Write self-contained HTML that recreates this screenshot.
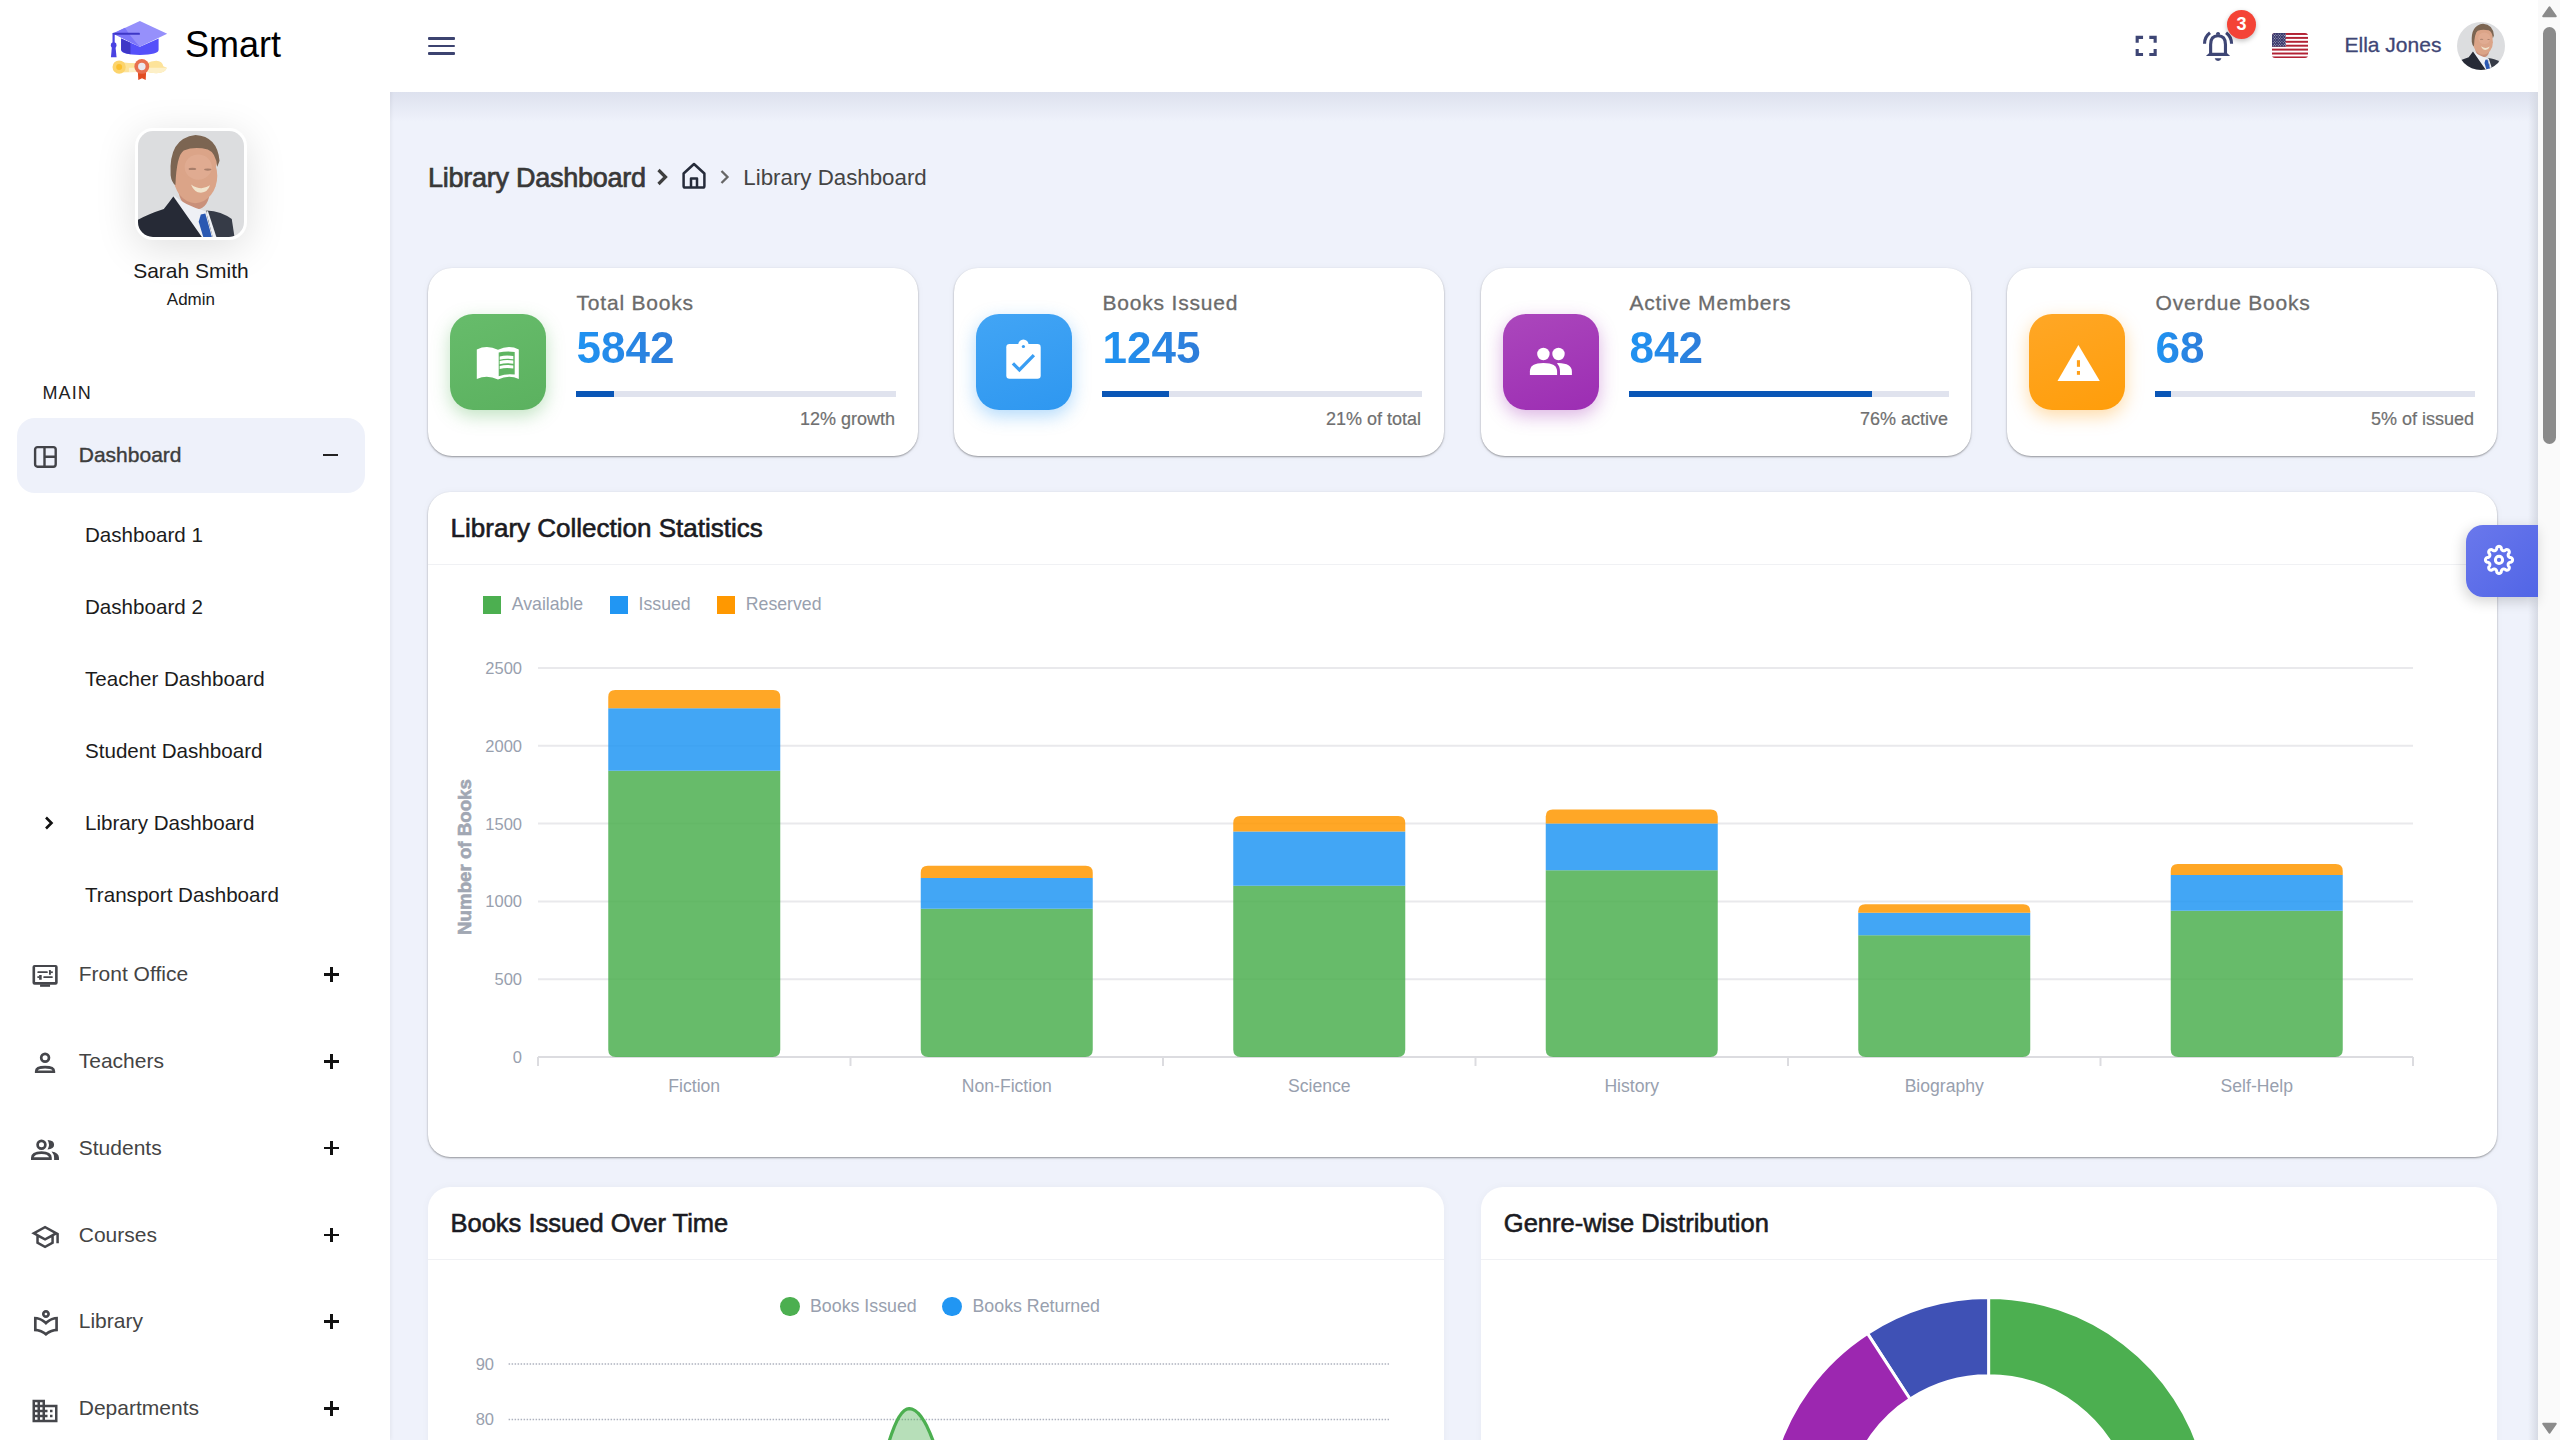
<!DOCTYPE html>
<html><head><meta charset="utf-8"><title>Library Dashboard</title><style>
*{margin:0;padding:0;box-sizing:border-box}
html,body{width:2560px;height:1440px;overflow:hidden;background:#eff2fb;font-family:"Liberation Sans", sans-serif;}
.t{position:absolute;white-space:nowrap;}
.a{position:absolute;}
svg{position:absolute;overflow:visible}
</style></head><body>
<div class="a" style="left:390px;top:92px;width:2148px;height:30px;background:linear-gradient(#dde1ee,rgba(239,242,251,0));"></div>
<div class="a" style="left:2528px;top:92px;width:10px;height:1348px;background:linear-gradient(90deg,rgba(215,219,230,0),#d6dae4);"></div>
<div class="a" style="left:0;top:0;width:390px;height:1440px;background:#fff;box-shadow:1px 0 4px rgba(0,0,0,.06);"></div>
<div class="a" style="left:0;top:0;width:2538px;height:92px;background:#fff;"></div>
<div class="a" style="left:2538px;top:0;width:22px;height:1440px;background:#fafafa;"></div>
<div class="a" style="left:2543px;top:27px;width:13px;height:417px;background:#8a8a8a;border-radius:7px;"></div>
<svg style="left:2540px;top:4px" width="20" height="16"><path d="M3.2,12.3 L9.5,3.3 L15.8,12.3Z" fill="#8a8a8a" stroke="#8a8a8a" stroke-width="2" stroke-linejoin="round"/></svg>
<svg style="left:2540px;top:1420px" width="20" height="16"><path d="M3.2,3.7 L9.5,12.7 L15.8,3.7Z" fill="#8a8a8a" stroke="#8a8a8a" stroke-width="2" stroke-linejoin="round"/></svg>
<svg style="left:100px;top:10px" width="200" height="80" viewBox="0 0 2560 1024">
<path d="M245,665 Q420,690 600,680 Q650,650 720,648 Q800,650 810,720 L855,738 Q840,805 720,808 Q640,805 600,790 L245,800Z" fill="#fde39a"/>
<path d="M370,740 L855,738 Q840,805 720,808 Q640,805 600,790 L370,792Z" fill="#fdf0c8"/>
<circle cx="245" cy="730" r="85" fill="#fcd46c"/><circle cx="245" cy="730" r="38" fill="#fbbf2d"/>
<path d="M485,795 H590 L585,895 L538,872 L490,895Z" fill="#e24c21"/>
<circle cx="535" cy="722" r="95" fill="#e86f4f"/><circle cx="535" cy="722" r="48" fill="#e9e7ef"/>
<path d="M270,365 V510 Q270,575 510,575 Q750,575 750,510 V365 L510,470Z" fill="#5550fa"/>
<path d="M270,365 V510 Q285,555 390,565 V420Z" fill="#3e37c6"/>
<path d="M510,140 L860,305 L510,470 L165,300Z" fill="#9690fb"/>
<path d="M165,300 L320,228 Q380,330 510,470Z" fill="#7c75f9"/>
<rect x="165" y="290" width="345" height="28" rx="6" fill="#3e37c6"/>
<rect x="160" y="300" width="28" height="150" fill="#4a43e2"/>
<circle cx="175" cy="450" r="36" fill="#4a43e2"/>
<path d="M152,470 H198 L212,605 H140Z" fill="#4a43e2"/>
</svg>
<div class="t" style="left:185px;top:26.53px;font-size:36px;line-height:36px;color:#000;font-weight:400;">Smart</div>
<div class="a" style="left:427.6px;top:37.05px;width:27.1px;height:2.7px;background:#3c4370;border-radius:1px;"></div>
<div class="a" style="left:427.6px;top:44.55px;width:27.1px;height:2.7px;background:#3c4370;border-radius:1px;"></div>
<div class="a" style="left:427.6px;top:52.05px;width:27.1px;height:2.7px;background:#3c4370;border-radius:1px;"></div>
<svg style="left:2120px;top:10px" width="200" height="70" viewBox="0 0 2560 896">
<g fill="none" stroke="#3e4675" stroke-width="40" stroke-linejoin="miter" stroke-linecap="butt">
<path d="M220,418 V350 H295"/><path d="M375,350 H450 V418"/><path d="M220,500 V570 H295"/><path d="M375,570 H450 V500"/>
<path d="M1160,560 V440 Q1160,330 1255,330 Q1350,330 1350,440 V560"/>
<path d="M1152,292 Q1082,345 1082,432"/><path d="M1358,292 Q1428,345 1428,432"/>
</g>
<path d="M1100,590 H1410 L1365,548 H1145Z" fill="#3e4675"/>
<path d="M1228,318 Q1228,282 1255,282 Q1282,282 1282,318Z" fill="#3e4675"/>
<path d="M1212,618 H1298 Q1290,652 1255,652 Q1220,652 1212,618Z" fill="#3e4675"/>
</svg>
<div class="a" style="left:2227px;top:9.5px;width:29px;height:29px;border-radius:50%;background:#f44336;box-shadow:0 2px 5px rgba(0,0,0,.25);"></div>
<div class="t" style="left:1741.6px;width:1000px;text-align:center;top:14.76px;font-size:18px;line-height:18px;color:#fff;font-weight:700;">3</div>
<div class="a" style="left:2272px;top:33px;width:36px;height:25.4px;border-radius:3px;overflow:hidden;background:#fff;">
<svg style="left:0;top:0" width="36" height="25.4"><rect x="0" y="0.000" width="36" height="1.954" fill="#b22234"/><rect x="0" y="3.908" width="36" height="1.954" fill="#b22234"/><rect x="0" y="7.815" width="36" height="1.954" fill="#b22234"/><rect x="0" y="11.723" width="36" height="1.954" fill="#b22234"/><rect x="0" y="15.631" width="36" height="1.954" fill="#b22234"/><rect x="0" y="19.538" width="36" height="1.954" fill="#b22234"/><rect x="0" y="23.446" width="36" height="1.954" fill="#b22234"/><rect x="0" y="0" width="13.7" height="13.7" fill="#3c3b6e"/><circle cx="1.20" cy="1.10" r="0.45" fill="#fff"/><circle cx="3.70" cy="1.10" r="0.45" fill="#fff"/><circle cx="6.20" cy="1.10" r="0.45" fill="#fff"/><circle cx="8.70" cy="1.10" r="0.45" fill="#fff"/><circle cx="11.20" cy="1.10" r="0.45" fill="#fff"/><circle cx="13.70" cy="1.10" r="0.45" fill="#fff"/><circle cx="2.45" cy="2.55" r="0.45" fill="#fff"/><circle cx="4.95" cy="2.55" r="0.45" fill="#fff"/><circle cx="7.45" cy="2.55" r="0.45" fill="#fff"/><circle cx="9.95" cy="2.55" r="0.45" fill="#fff"/><circle cx="12.45" cy="2.55" r="0.45" fill="#fff"/><circle cx="1.20" cy="4.00" r="0.45" fill="#fff"/><circle cx="3.70" cy="4.00" r="0.45" fill="#fff"/><circle cx="6.20" cy="4.00" r="0.45" fill="#fff"/><circle cx="8.70" cy="4.00" r="0.45" fill="#fff"/><circle cx="11.20" cy="4.00" r="0.45" fill="#fff"/><circle cx="13.70" cy="4.00" r="0.45" fill="#fff"/><circle cx="2.45" cy="5.45" r="0.45" fill="#fff"/><circle cx="4.95" cy="5.45" r="0.45" fill="#fff"/><circle cx="7.45" cy="5.45" r="0.45" fill="#fff"/><circle cx="9.95" cy="5.45" r="0.45" fill="#fff"/><circle cx="12.45" cy="5.45" r="0.45" fill="#fff"/><circle cx="1.20" cy="6.90" r="0.45" fill="#fff"/><circle cx="3.70" cy="6.90" r="0.45" fill="#fff"/><circle cx="6.20" cy="6.90" r="0.45" fill="#fff"/><circle cx="8.70" cy="6.90" r="0.45" fill="#fff"/><circle cx="11.20" cy="6.90" r="0.45" fill="#fff"/><circle cx="13.70" cy="6.90" r="0.45" fill="#fff"/><circle cx="2.45" cy="8.35" r="0.45" fill="#fff"/><circle cx="4.95" cy="8.35" r="0.45" fill="#fff"/><circle cx="7.45" cy="8.35" r="0.45" fill="#fff"/><circle cx="9.95" cy="8.35" r="0.45" fill="#fff"/><circle cx="12.45" cy="8.35" r="0.45" fill="#fff"/><circle cx="1.20" cy="9.80" r="0.45" fill="#fff"/><circle cx="3.70" cy="9.80" r="0.45" fill="#fff"/><circle cx="6.20" cy="9.80" r="0.45" fill="#fff"/><circle cx="8.70" cy="9.80" r="0.45" fill="#fff"/><circle cx="11.20" cy="9.80" r="0.45" fill="#fff"/><circle cx="13.70" cy="9.80" r="0.45" fill="#fff"/><circle cx="2.45" cy="11.25" r="0.45" fill="#fff"/><circle cx="4.95" cy="11.25" r="0.45" fill="#fff"/><circle cx="7.45" cy="11.25" r="0.45" fill="#fff"/><circle cx="9.95" cy="11.25" r="0.45" fill="#fff"/><circle cx="12.45" cy="11.25" r="0.45" fill="#fff"/><circle cx="1.20" cy="12.70" r="0.45" fill="#fff"/><circle cx="3.70" cy="12.70" r="0.45" fill="#fff"/><circle cx="6.20" cy="12.70" r="0.45" fill="#fff"/><circle cx="8.70" cy="12.70" r="0.45" fill="#fff"/><circle cx="11.20" cy="12.70" r="0.45" fill="#fff"/><circle cx="13.70" cy="12.70" r="0.45" fill="#fff"/></svg></div>
<div class="t" style="left:2344.5px;top:34.22px;font-size:21px;line-height:21px;color:#3e4675;font-weight:400;-webkit-text-stroke:0.3px #3e4675;">Ella Jones</div>
<div class="a" style="left:135px;top:128px;width:112px;height:112px;border-radius:18px;background:#fff;box-shadow:0 8px 40px rgba(0,0,0,.13);"></div>
<div class="a" style="left:138px;top:131px;width:106px;height:106px;border-radius:15px;overflow:hidden;">
<svg style="left:0;top:0" width="106" height="106" viewBox="135 120 1170 1175" preserveAspectRatio="none"><rect x="135" y="120" width="1170" height="1175" fill="#dcdddf"/>
<path d="M890,1000 Q1060,1010 1170,1095 L1200,1295 H930Z" fill="#363b47"/>
<path d="M575,760 Q600,960 760,990 Q900,990 925,820 L930,700 L600,700Z" fill="#c9907a"/>
<path d="M525,830 Q640,940 880,1010 L960,1295 H820Z" fill="#eef0f5"/>
<path d="M135,1105 Q250,1040 420,985 Q470,920 525,845 L840,1295 H135Z" fill="#262a36"/>
<path d="M905,1000 L1000,1295 H960 L890,1030Z" fill="#eef0f5"/>
<path d="M828,1045 L878,1035 L905,1130 L950,1295 H855 L805,1125Z" fill="#2a58b2"/>
<ellipse cx="768" cy="615" rx="242" ry="305" fill="#dba488"/><ellipse cx="775" cy="450" rx="235" ry="200" fill="#dba488"/>
<ellipse cx="800" cy="520" rx="150" ry="140" fill="#e3b198" opacity=".6"/>
<path d="M495,610 Q470,200 770,165 Q1010,180 1035,450 L1010,520 Q995,360 905,325 Q760,290 640,335 Q560,390 548,720 Q505,690 495,610Z" fill="#7c6552"/>
<path d="M720,712 Q830,790 930,722 Q905,800 830,805 Q755,800 720,712Z" fill="#f1e4cc"/>
<ellipse cx="735" cy="540" rx="42" ry="13" fill="#7a5a4a" opacity=".55"/><ellipse cx="905" cy="548" rx="40" ry="12" fill="#7a5a4a" opacity=".55"/>
</svg></div>
<div class="a" style="left:2457px;top:22px;width:48px;height:48px;border-radius:50%;overflow:hidden;">
<svg style="left:0;top:0" width="48" height="48" viewBox="135 120 1170 1175" preserveAspectRatio="none"><rect x="135" y="120" width="1170" height="1175" fill="#dcdddf"/>
<path d="M890,1000 Q1060,1010 1170,1095 L1200,1295 H930Z" fill="#363b47"/>
<path d="M575,760 Q600,960 760,990 Q900,990 925,820 L930,700 L600,700Z" fill="#c9907a"/>
<path d="M525,830 Q640,940 880,1010 L960,1295 H820Z" fill="#eef0f5"/>
<path d="M135,1105 Q250,1040 420,985 Q470,920 525,845 L840,1295 H135Z" fill="#262a36"/>
<path d="M905,1000 L1000,1295 H960 L890,1030Z" fill="#eef0f5"/>
<path d="M828,1045 L878,1035 L905,1130 L950,1295 H855 L805,1125Z" fill="#2a58b2"/>
<ellipse cx="768" cy="615" rx="242" ry="305" fill="#dba488"/><ellipse cx="775" cy="450" rx="235" ry="200" fill="#dba488"/>
<ellipse cx="800" cy="520" rx="150" ry="140" fill="#e3b198" opacity=".6"/>
<path d="M495,610 Q470,200 770,165 Q1010,180 1035,450 L1010,520 Q995,360 905,325 Q760,290 640,335 Q560,390 548,720 Q505,690 495,610Z" fill="#7c6552"/>
<path d="M720,712 Q830,790 930,722 Q905,800 830,805 Q755,800 720,712Z" fill="#f1e4cc"/>
<ellipse cx="735" cy="540" rx="42" ry="13" fill="#7a5a4a" opacity=".55"/><ellipse cx="905" cy="548" rx="40" ry="12" fill="#7a5a4a" opacity=".55"/>
</svg></div>
<div class="t" style="left:-309.1px;width:1000px;text-align:center;top:260.22px;font-size:21px;line-height:21px;color:#1a1a1a;font-weight:400;">Sarah Smith</div>
<div class="t" style="left:-309.1px;width:1000px;text-align:center;top:290.61px;font-size:17px;line-height:17px;color:#1a1a1a;font-weight:400;">Admin</div>
<div class="t" style="left:42.5px;top:383.51px;font-size:18px;line-height:18px;color:#222;font-weight:400;letter-spacing:1.1px;">MAIN</div>
<div class="a" style="left:17px;top:418px;width:348px;height:75px;border-radius:18px;background:#eef1fa;"></div>
<svg style="left:33px;top:445px" width="25" height="24" viewBox="0 0 25 24"><g fill="none" stroke="#424348" stroke-width="2.4">
<rect x="2.1" y="2.1" width="20.6" height="19.6" rx="2.4"/><path d="M11.5,2 V21.8 M11.5,11.8 H22.8"/></g></svg>
<div class="t" style="left:78.75px;top:444.22px;font-size:21px;line-height:21px;color:#3d3d3d;font-weight:400;-webkit-text-stroke:0.4px #3d3d3d;">Dashboard</div>
<div class="a" style="left:323px;top:453.8px;width:14.5px;height:2.5px;background:#222;"></div>
<div class="t" style="left:85px;top:524.56px;font-size:20.6px;line-height:20.6px;color:#1c1c1c;font-weight:400;">Dashboard 1</div>
<div class="t" style="left:85px;top:596.56px;font-size:20.6px;line-height:20.6px;color:#1c1c1c;font-weight:400;">Dashboard 2</div>
<div class="t" style="left:85px;top:668.56px;font-size:20.6px;line-height:20.6px;color:#1c1c1c;font-weight:400;">Teacher Dashboard</div>
<div class="t" style="left:85px;top:740.56px;font-size:20.6px;line-height:20.6px;color:#1c1c1c;font-weight:400;">Student Dashboard</div>
<div class="t" style="left:85px;top:812.56px;font-size:20.6px;line-height:20.6px;color:#1c1c1c;font-weight:400;">Library Dashboard</div>
<div class="t" style="left:85px;top:884.56px;font-size:20.6px;line-height:20.6px;color:#1c1c1c;font-weight:400;">Transport Dashboard</div>
<svg style="left:42px;top:814px" width="14" height="18" viewBox="0 0 14 18"><path d="M4,3.5 L9.5,9 L4,14.5" fill="none" stroke="#111" stroke-width="2.6"/></svg>
<div class="t" style="left:78.75px;top:963.22px;font-size:21px;line-height:21px;color:#444;font-weight:400;">Front Office</div>
<div class="a" style="left:324px;top:973.20px;width:14.75px;height:2.6px;background:#111;"></div>
<div class="a" style="left:330.1px;top:967.10px;width:2.6px;height:14.75px;background:#111;"></div>
<div class="t" style="left:78.75px;top:1050.02px;font-size:21px;line-height:21px;color:#444;font-weight:400;">Teachers</div>
<div class="a" style="left:324px;top:1060.00px;width:14.75px;height:2.6px;background:#111;"></div>
<div class="a" style="left:330.1px;top:1053.90px;width:2.6px;height:14.75px;background:#111;"></div>
<div class="t" style="left:78.75px;top:1136.82px;font-size:21px;line-height:21px;color:#444;font-weight:400;">Students</div>
<div class="a" style="left:324px;top:1146.80px;width:14.75px;height:2.6px;background:#111;"></div>
<div class="a" style="left:330.1px;top:1140.70px;width:2.6px;height:14.75px;background:#111;"></div>
<div class="t" style="left:78.75px;top:1223.62px;font-size:21px;line-height:21px;color:#444;font-weight:400;">Courses</div>
<div class="a" style="left:324px;top:1233.60px;width:14.75px;height:2.6px;background:#111;"></div>
<div class="a" style="left:330.1px;top:1227.50px;width:2.6px;height:14.75px;background:#111;"></div>
<div class="t" style="left:78.75px;top:1310.42px;font-size:21px;line-height:21px;color:#444;font-weight:400;">Library</div>
<div class="a" style="left:324px;top:1320.40px;width:14.75px;height:2.6px;background:#111;"></div>
<div class="a" style="left:330.1px;top:1314.30px;width:2.6px;height:14.75px;background:#111;"></div>
<div class="t" style="left:78.75px;top:1397.22px;font-size:21px;line-height:21px;color:#444;font-weight:400;">Departments</div>
<div class="a" style="left:324px;top:1407.20px;width:14.75px;height:2.6px;background:#111;"></div>
<div class="a" style="left:330.1px;top:1401.10px;width:2.6px;height:14.75px;background:#111;"></div>
<svg style="left:20px;top:950px" width="60" height="50" viewBox="0 0 1728 1440"><g fill="#45464b">
<path fill-rule="evenodd" d="M420,430 H1025 Q1085,430 1085,490 V940 Q1085,1000 1025,1000 H420 Q360,1000 360,940 V490 Q360,430 420,430Z M435,490 V925 H1010 V490Z"/>
<rect x="578" y="990" width="287" height="70"/>
<rect x="500" y="615" width="300" height="50" rx="20"/><rect x="835" y="578" width="55" height="137" rx="10"/><rect x="880" y="615" width="65" height="50"/>
<rect x="670" y="755" width="275" height="50" rx="20"/><rect x="550" y="720" width="75" height="140" rx="10"/><rect x="500" y="755" width="60" height="50"/>
</g></svg>
<svg style="left:20px;top:1040px" width="60" height="130" viewBox="0 0 665 1440">
<circle cx="278" cy="197" r="43" fill="none" stroke="#45464b" stroke-width="30"/>
<path fill="#45464b" fill-rule="evenodd" d="M165,365 V345 Q165,285 278,285 Q390,285 390,345 V365Z M197,337 Q212,315 278,315 Q345,315 360,337Z"/>
<circle cx="238" cy="1160" r="43" fill="none" stroke="#45464b" stroke-width="30"/>
<path fill="#45464b" d="M305,1108 Q378,1112 378,1160 Q378,1208 305,1212 Q338,1160 305,1108Z"/>
<path fill="#45464b" fill-rule="evenodd" d="M122,1330 V1305 Q122,1232 238,1232 Q352,1232 352,1305 V1330Z M152,1300 Q165,1262 238,1262 Q310,1262 322,1300Z"/>
<path fill="#45464b" d="M350,1236 Q432,1250 432,1305 V1330 H378 V1305 Q378,1268 350,1236Z"/>
</svg>
<svg style="left:30.25px;top:1222.2px" width="30.1" height="30.1" viewBox="0 0 24 24"><path fill="#45464b" d="M12 3L1 9l4 2.18v6L12 21l7-3.82v-6l2-1.09V17h2V9L12 3zm6.82 6L12 12.72 5.18 9 12 5.28 18.82 9zM17 15.99l-5 2.73-5-2.73v-3.72L12 15l5-2.73v3.72z"/></svg>
<svg style="left:29.6px;top:1305.8px" width="31.9" height="31.9" viewBox="0 0 24 24"><path fill="#45464b" d="M12 9c1.66 0 3-1.34 3-3s-1.34-3-3-3-3 1.34-3 3 1.34 3 3 3zm0-4c.55 0 1 .45 1 1s-.45 1-1 1-1-.45-1-1 .45-1 1-1zm0 6.55C9.64 9.35 6.48 8 3 8v11c3.48 0 6.64 1.35 9 3.55 2.36-2.19 5.52-3.55 9-3.55V8c-3.48 0-6.64 1.35-9 3.55zm7 5.58c-2.53.34-4.93 1.3-7 2.82-2.06-1.52-4.470-2.49-7-2.83v-6.95c2.1.38 4.05 1.35 5.64 2.83L12 14.28l1.36-1.27c1.59-1.48 3.54-2.45 5.64-2.830v6.95z"/></svg>
<svg style="left:30px;top:1396px" width="30" height="30" viewBox="0 0 24 24"><path fill="#45464b" d="M12 7V3H2v18h20V7H12zM6 19H4v-2h2v2zm0-4H4v-2h2v2zm0-4H4V9h2v2zm0-4H4V5h2v2zm4 12H8v-2h2v2zm0-4H8v-2h2v2zm0-4H8V9h2v2zm0-4H8V5h2v2zm10 12h-8v-2h2v-2h-2v-2h2v-2h-2V9h8v10zm-2-8h-2v2h2v-2zm0 4h-2v2h2v-2z"/></svg>
<div class="t" style="left:428px;top:165.14px;font-size:27px;line-height:27px;color:#383838;font-weight:400;letter-spacing:-0.25px;-webkit-text-stroke:0.7px #383838;">Library Dashboard</div>
<svg style="left:654px;top:166px" width="18" height="22" viewBox="0 0 18 22"><path d="M4.5,4 L11.5,11 L4.5,18" fill="none" stroke="#3f3f3f" stroke-width="3.2"/></svg>
<svg style="left:681px;top:161px" width="26" height="29" viewBox="0 0 26 29"><path d="M2.6,12.5 L13,3 L23.4,12.5 V25 Q23.4,26.6 21.8,26.6 H4.2 Q2.6,26.6 2.6,25Z M10,26.6 V17.5 H16 V26.6" fill="none" stroke="#252b3a" stroke-width="2.5" stroke-linejoin="round"/></svg>
<svg style="left:718px;top:168px" width="15" height="18" viewBox="0 0 15 18"><path d="M3.5,3 L9.5,9 L3.5,15" fill="none" stroke="#666" stroke-width="2.3"/></svg>
<div class="t" style="left:743.3px;top:167.12px;font-size:22.3px;line-height:22.3px;color:#444;font-weight:400;">Library Dashboard</div>
<div class="a" style="left:428px;top:268px;width:490px;height:188px;background:#fff;border-radius:24px;box-shadow:0 1px 2px rgba(0,0,0,.38),0 0 8px rgba(0,0,0,.035);"></div>
<div class="a" style="left:450px;top:314px;width:96px;height:96px;border-radius:23px;background:linear-gradient(160deg,#67bc6b,#5bb15f);box-shadow:0 6px 18px rgba(76,175,80,.35);"><svg style="left:0;top:0" width="96" height="96" viewBox="0 0 96 96"><path fill="#fff" d="M26.8,35.5 Q37,30.5 48,35.8 Q59,30.5 68.8,35.5 V65 Q59,60.5 48,65.4 Q37,60.5 26.8,65Z"/><path fill="#5fb562" d="M48.7,38.6 Q56,36.6 64.7,37.9 V60.5 Q56,59.5 48.7,62.2Z"/><path fill="#fff" d="M49.7,42.6 Q56,40.8 63.3,42.1 V45.2 Q56,43.9 49.7,45.7Z M49.7,47.1 Q56,45.3 63.3,46.6 V49.7 Q56,48.4 49.7,50.2Z M49.7,52 Q56,50.2 63.3,51.5 V54.6 Q56,53.3 49.7,55.1Z"/></svg></div>
<div class="t" style="left:576.5px;top:292.22px;font-size:21px;line-height:21px;color:#6b6b6b;font-weight:400;letter-spacing:0.8px;-webkit-text-stroke:0.3px #6b6b6b;">Total Books</div>
<div class="t" style="left:576.5px;top:326.25px;font-size:44px;line-height:44px;color:#2389ea;font-weight:700;background:linear-gradient(90deg,#1f93f2,#2f7bd8);-webkit-background-clip:text;background-clip:text;color:transparent;padding-right:4px;">5842</div>
<div class="a" style="left:576px;top:391px;width:320px;height:6px;background:#e0e3ee;"></div>
<div class="a" style="left:576px;top:391px;width:38.4px;height:6px;background:#0a56b6;"></div>
<div class="t" style="right:1665px;text-align:right;top:409.76px;font-size:18px;line-height:18px;color:#707070;font-weight:400;-webkit-text-stroke:0.2px #707070;">12% growth</div>
<div class="a" style="left:954px;top:268px;width:490px;height:188px;background:#fff;border-radius:24px;box-shadow:0 1px 2px rgba(0,0,0,.38),0 0 8px rgba(0,0,0,.035);"></div>
<div class="a" style="left:976px;top:314px;width:96px;height:96px;border-radius:23px;background:linear-gradient(160deg,#42a5f5,#2e97f0);box-shadow:0 6px 18px rgba(33,150,243,.35);"><svg style="left:0;top:0" width="96" height="96" viewBox="0 0 96 96"><rect x="30.3" y="30" width="34.4" height="34.7" rx="3.2" fill="#fff"/><circle cx="47.4" cy="30.6" r="5.2" fill="#fff"/><circle cx="47.4" cy="32.5" r="1.6" fill="#3a9ef3"/><path d="M36.9,49.4 L43.4,55.9 L57.9,41.2" fill="none" stroke="#3a9ef3" stroke-width="3.3"/></svg></div>
<div class="t" style="left:1102.5px;top:292.22px;font-size:21px;line-height:21px;color:#6b6b6b;font-weight:400;letter-spacing:0.8px;-webkit-text-stroke:0.3px #6b6b6b;">Books Issued</div>
<div class="t" style="left:1102.5px;top:326.25px;font-size:44px;line-height:44px;color:#2389ea;font-weight:700;background:linear-gradient(90deg,#1f93f2,#2f7bd8);-webkit-background-clip:text;background-clip:text;color:transparent;padding-right:4px;">1245</div>
<div class="a" style="left:1102px;top:391px;width:320px;height:6px;background:#e0e3ee;"></div>
<div class="a" style="left:1102px;top:391px;width:67.2px;height:6px;background:#0a56b6;"></div>
<div class="t" style="right:1139px;text-align:right;top:409.76px;font-size:18px;line-height:18px;color:#707070;font-weight:400;-webkit-text-stroke:0.2px #707070;">21% of total</div>
<div class="a" style="left:1481px;top:268px;width:490px;height:188px;background:#fff;border-radius:24px;box-shadow:0 1px 2px rgba(0,0,0,.38),0 0 8px rgba(0,0,0,.035);"></div>
<div class="a" style="left:1503px;top:314px;width:96px;height:96px;border-radius:23px;background:linear-gradient(160deg,#ab47bc,#9c2db3);box-shadow:0 6px 18px rgba(156,39,176,.35);"><svg style="left:0;top:0" width="96" height="96" viewBox="0 0 96 96"><circle cx="40.4" cy="40" r="6.2" fill="#fff"/><circle cx="55.5" cy="40" r="6.2" fill="#fff"/><path fill="#fff" d="M26.9,60.9 V57.5 Q26.9,49.1 40.5,49.1 Q54.1,49.1 54.1,57.5 V60.9Z"/><path fill="#fff" d="M55.2,49.1 Q68.9,49.5 68.9,57.5 V60.9 H57 V57.5 Q57,52.3 53.9,49.2Z"/></svg></div>
<div class="t" style="left:1629.5px;top:292.22px;font-size:21px;line-height:21px;color:#6b6b6b;font-weight:400;letter-spacing:0.8px;-webkit-text-stroke:0.3px #6b6b6b;">Active Members</div>
<div class="t" style="left:1629.5px;top:326.25px;font-size:44px;line-height:44px;color:#2389ea;font-weight:700;background:linear-gradient(90deg,#1f93f2,#2f7bd8);-webkit-background-clip:text;background-clip:text;color:transparent;padding-right:4px;">842</div>
<div class="a" style="left:1629px;top:391px;width:320px;height:6px;background:#e0e3ee;"></div>
<div class="a" style="left:1629px;top:391px;width:243.2px;height:6px;background:#0a56b6;"></div>
<div class="t" style="right:612px;text-align:right;top:409.76px;font-size:18px;line-height:18px;color:#707070;font-weight:400;-webkit-text-stroke:0.2px #707070;">76% active</div>
<div class="a" style="left:2007px;top:268px;width:490px;height:188px;background:#fff;border-radius:24px;box-shadow:0 1px 2px rgba(0,0,0,.38),0 0 8px rgba(0,0,0,.035);"></div>
<div class="a" style="left:2029px;top:314px;width:96px;height:96px;border-radius:23px;background:linear-gradient(160deg,#ffa726,#ff9d0a);box-shadow:0 6px 18px rgba(255,152,0,.35);"><svg style="left:0;top:0" width="96" height="96" viewBox="0 0 96 96"><path fill="#fff" d="M49.4,30.9 L70.8,67 H28.5Z"/><rect x="47.9" y="46.2" width="3.1" height="6.6" fill="#ffa01a"/><rect x="47.9" y="57" width="3.1" height="3.8" fill="#ffa01a"/></svg></div>
<div class="t" style="left:2155.5px;top:292.22px;font-size:21px;line-height:21px;color:#6b6b6b;font-weight:400;letter-spacing:0.8px;-webkit-text-stroke:0.3px #6b6b6b;">Overdue Books</div>
<div class="t" style="left:2155.5px;top:326.25px;font-size:44px;line-height:44px;color:#2389ea;font-weight:700;background:linear-gradient(90deg,#1f93f2,#2f7bd8);-webkit-background-clip:text;background-clip:text;color:transparent;padding-right:4px;">68</div>
<div class="a" style="left:2155px;top:391px;width:320px;height:6px;background:#e0e3ee;"></div>
<div class="a" style="left:2155px;top:391px;width:16.0px;height:6px;background:#0a56b6;"></div>
<div class="t" style="right:86px;text-align:right;top:409.76px;font-size:18px;line-height:18px;color:#707070;font-weight:400;-webkit-text-stroke:0.2px #707070;">5% of issued</div>
<div class="a" style="left:428px;top:492px;width:2069px;height:665px;background:#fff;border-radius:22px;box-shadow:0 1px 2px rgba(0,0,0,.38),0 0 8px rgba(0,0,0,.035);"></div>
<div class="t" style="left:450.6px;top:514.99px;font-size:26px;line-height:26px;color:#1b1b22;font-weight:400;-webkit-text-stroke:0.6px #1b1b22;">Library Collection Statistics</div>
<div class="a" style="left:428px;top:563.5px;width:2069px;height:1.5px;background:#f0f1f4;"></div>
<div class="a" style="left:483px;top:596px;width:18px;height:18px;background:#4caf50;"></div>
<div class="t" style="left:511.75px;top:596.42px;font-size:17.7px;line-height:17.7px;color:#98a0ae;font-weight:400;">Available</div>
<div class="a" style="left:610.3px;top:596px;width:18px;height:18px;background:#2196f3;"></div>
<div class="t" style="left:638.6px;top:596.42px;font-size:17.7px;line-height:17.7px;color:#98a0ae;font-weight:400;">Issued</div>
<div class="a" style="left:717.2px;top:596px;width:18px;height:18px;background:#ff9800;"></div>
<div class="t" style="left:745.8px;top:596.42px;font-size:17.7px;line-height:17.7px;color:#98a0ae;font-weight:400;">Reserved</div>
<svg style="left:0;top:0" width="2560" height="1440" viewBox="0 0 2560 1440">
<line x1="538" y1="668.0" x2="2413" y2="668.0" stroke="#e9e9ec" stroke-width="2"/>
<line x1="538" y1="745.8" x2="2413" y2="745.8" stroke="#e9e9ec" stroke-width="2"/>
<line x1="538" y1="823.6" x2="2413" y2="823.6" stroke="#e9e9ec" stroke-width="2"/>
<line x1="538" y1="901.4" x2="2413" y2="901.4" stroke="#e9e9ec" stroke-width="2"/>
<line x1="538" y1="979.2" x2="2413" y2="979.2" stroke="#e9e9ec" stroke-width="2"/>
<line x1="538" y1="1057" x2="2413" y2="1057" stroke="#dcdce0" stroke-width="2"/>
<line x1="538.0" y1="1057" x2="538.0" y2="1066" stroke="#dcdce0" stroke-width="2"/>
<line x1="850.5" y1="1057" x2="850.5" y2="1066" stroke="#dcdce0" stroke-width="2"/>
<line x1="1163.0" y1="1057" x2="1163.0" y2="1066" stroke="#dcdce0" stroke-width="2"/>
<line x1="1475.5" y1="1057" x2="1475.5" y2="1066" stroke="#dcdce0" stroke-width="2"/>
<line x1="1788.0" y1="1057" x2="1788.0" y2="1066" stroke="#dcdce0" stroke-width="2"/>
<line x1="2100.5" y1="1057" x2="2100.5" y2="1066" stroke="#dcdce0" stroke-width="2"/>
<line x1="2413.0" y1="1057" x2="2413.0" y2="1066" stroke="#dcdce0" stroke-width="2"/>
<path d="M608.25,770.7 Q608.25,770.7 608.25,770.7 H780.25 Q780.25,770.7 780.25,770.7 V1049.5 Q780.25,1057 772.75,1057 H615.75 Q608.25,1057 608.25,1049.5 Z" fill="#4caf50" fill-opacity=".85"/>
<path d="M608.25,708.3 Q608.25,708.3 608.25,708.3 H780.25 Q780.25,708.3 780.25,708.3 V770.7 Q780.25,770.7 780.25,770.7 H608.25 Q608.25,770.7 608.25,770.7 Z" fill="#2196f3" fill-opacity=".85"/>
<path d="M608.25,697 Q608.25,690 615.25,690 H773.25 Q780.25,690 780.25,697 V708.3 Q780.25,708.3 780.25,708.3 H608.25 Q608.25,708.3 608.25,708.3 Z" fill="#ff9800" fill-opacity=".85"/>
<path d="M920.75,908.8 Q920.75,908.8 920.75,908.8 H1092.75 Q1092.75,908.8 1092.75,908.8 V1049.5 Q1092.75,1057 1085.25,1057 H928.25 Q920.75,1057 920.75,1049.5 Z" fill="#4caf50" fill-opacity=".85"/>
<path d="M920.75,877.9 Q920.75,877.9 920.75,877.9 H1092.75 Q1092.75,877.9 1092.75,877.9 V908.8 Q1092.75,908.8 1092.75,908.8 H920.75 Q920.75,908.8 920.75,908.8 Z" fill="#2196f3" fill-opacity=".85"/>
<path d="M920.75,872.7 Q920.75,865.7 927.75,865.7 H1085.75 Q1092.75,865.7 1092.75,872.7 V877.9 Q1092.75,877.9 1092.75,877.9 H920.75 Q920.75,877.9 920.75,877.9 Z" fill="#ff9800" fill-opacity=".85"/>
<path d="M1233.25,885.8 Q1233.25,885.8 1233.25,885.8 H1405.25 Q1405.25,885.8 1405.25,885.8 V1049.5 Q1405.25,1057 1397.75,1057 H1240.75 Q1233.25,1057 1233.25,1049.5 Z" fill="#4caf50" fill-opacity=".85"/>
<path d="M1233.25,831.5 Q1233.25,831.5 1233.25,831.5 H1405.25 Q1405.25,831.5 1405.25,831.5 V885.8 Q1405.25,885.8 1405.25,885.8 H1233.25 Q1233.25,885.8 1233.25,885.8 Z" fill="#2196f3" fill-opacity=".85"/>
<path d="M1233.25,823 Q1233.25,816 1240.25,816 H1398.25 Q1405.25,816 1405.25,823 V831.5 Q1405.25,831.5 1405.25,831.5 H1233.25 Q1233.25,831.5 1233.25,831.5 Z" fill="#ff9800" fill-opacity=".85"/>
<path d="M1545.75,870.3 Q1545.75,870.3 1545.75,870.3 H1717.75 Q1717.75,870.3 1717.75,870.3 V1049.5 Q1717.75,1057 1710.25,1057 H1553.25 Q1545.75,1057 1545.75,1049.5 Z" fill="#4caf50" fill-opacity=".85"/>
<path d="M1545.75,823.6 Q1545.75,823.6 1545.75,823.6 H1717.75 Q1717.75,823.6 1717.75,823.6 V870.3 Q1717.75,870.3 1717.75,870.3 H1545.75 Q1545.75,870.3 1545.75,870.3 Z" fill="#2196f3" fill-opacity=".85"/>
<path d="M1545.75,816.6 Q1545.75,809.6 1552.75,809.6 H1710.75 Q1717.75,809.6 1717.75,816.6 V823.6 Q1717.75,823.6 1717.75,823.6 H1545.75 Q1545.75,823.6 1545.75,823.6 Z" fill="#ff9800" fill-opacity=".85"/>
<path d="M1858.25,935.3 Q1858.25,935.3 1858.25,935.3 H2030.25 Q2030.25,935.3 2030.25,935.3 V1049.5 Q2030.25,1057 2022.75,1057 H1865.75 Q1858.25,1057 1858.25,1049.5 Z" fill="#4caf50" fill-opacity=".85"/>
<path d="M1858.25,912.7 Q1858.25,912.7 1858.25,912.7 H2030.25 Q2030.25,912.7 2030.25,912.7 V935.3 Q2030.25,935.3 2030.25,935.3 H1858.25 Q1858.25,935.3 1858.25,935.3 Z" fill="#2196f3" fill-opacity=".85"/>
<path d="M1858.25,911.3 Q1858.25,904.3 1865.25,904.3 H2023.25 Q2030.25,904.3 2030.25,911.3 V912.7 Q2030.25,912.7 2030.25,912.7 H1858.25 Q1858.25,912.7 1858.25,912.7 Z" fill="#ff9800" fill-opacity=".85"/>
<path d="M2170.75,910.7 Q2170.75,910.7 2170.75,910.7 H2342.75 Q2342.75,910.7 2342.75,910.7 V1049.5 Q2342.75,1057 2335.25,1057 H2178.25 Q2170.75,1057 2170.75,1049.5 Z" fill="#4caf50" fill-opacity=".85"/>
<path d="M2170.75,875 Q2170.75,875 2170.75,875 H2342.75 Q2342.75,875 2342.75,875 V910.7 Q2342.75,910.7 2342.75,910.7 H2170.75 Q2170.75,910.7 2170.75,910.7 Z" fill="#2196f3" fill-opacity=".85"/>
<path d="M2170.75,871 Q2170.75,864 2177.75,864 H2335.75 Q2342.75,864 2342.75,871 V875 Q2342.75,875 2342.75,875 H2170.75 Q2170.75,875 2170.75,875 Z" fill="#ff9800" fill-opacity=".85"/>
</svg>
<div class="t" style="right:2038px;text-align:right;top:660.03px;font-size:16.5px;line-height:16.5px;color:#98a0ae;font-weight:400;">2500</div>
<div class="t" style="right:2038px;text-align:right;top:737.83px;font-size:16.5px;line-height:16.5px;color:#98a0ae;font-weight:400;">2000</div>
<div class="t" style="right:2038px;text-align:right;top:815.63px;font-size:16.5px;line-height:16.5px;color:#98a0ae;font-weight:400;">1500</div>
<div class="t" style="right:2038px;text-align:right;top:893.43px;font-size:16.5px;line-height:16.5px;color:#98a0ae;font-weight:400;">1000</div>
<div class="t" style="right:2038px;text-align:right;top:971.23px;font-size:16.5px;line-height:16.5px;color:#98a0ae;font-weight:400;">500</div>
<div class="t" style="right:2038px;text-align:right;top:1049.03px;font-size:16.5px;line-height:16.5px;color:#98a0ae;font-weight:400;">0</div>
<div class="t" style="left:194.25px;width:1000px;text-align:center;top:1077.80px;font-size:17.6px;line-height:17.6px;color:#98a0ae;font-weight:400;">Fiction</div>
<div class="t" style="left:506.75px;width:1000px;text-align:center;top:1077.80px;font-size:17.6px;line-height:17.6px;color:#98a0ae;font-weight:400;">Non-Fiction</div>
<div class="t" style="left:819.25px;width:1000px;text-align:center;top:1077.80px;font-size:17.6px;line-height:17.6px;color:#98a0ae;font-weight:400;">Science</div>
<div class="t" style="left:1131.75px;width:1000px;text-align:center;top:1077.80px;font-size:17.6px;line-height:17.6px;color:#98a0ae;font-weight:400;">History</div>
<div class="t" style="left:1444.25px;width:1000px;text-align:center;top:1077.80px;font-size:17.6px;line-height:17.6px;color:#98a0ae;font-weight:400;">Biography</div>
<div class="t" style="left:1756.75px;width:1000px;text-align:center;top:1077.80px;font-size:17.6px;line-height:17.6px;color:#98a0ae;font-weight:400;">Self-Help</div>
<div class="t" style="left:365px;top:846.7px;width:200px;height:20px;line-height:20px;text-align:center;font-size:18.7px;font-weight:700;color:#a1a7b3;-webkit-text-stroke:0.6px #a1a7b3;transform:rotate(-90deg);">Number of Books</div>
<div class="a" style="left:428px;top:1187px;width:1016px;height:400px;background:#fff;border-radius:22px;box-shadow:0 0 8px rgba(0,0,0,.035);"></div>
<div class="t" style="left:450.5px;top:1211.01px;font-size:25.5px;line-height:25.5px;color:#1b1b22;font-weight:400;-webkit-text-stroke:0.6px #1b1b22;">Books Issued Over Time</div>
<div class="a" style="left:428px;top:1258.5px;width:1016px;height:1.5px;background:#f0f1f4;"></div>
<div class="a" style="left:1481px;top:1187px;width:1016px;height:400px;background:#fff;border-radius:22px;box-shadow:0 0 8px rgba(0,0,0,.035);"></div>
<div class="t" style="left:1503.8px;top:1211.01px;font-size:25.5px;line-height:25.5px;color:#1b1b22;font-weight:400;-webkit-text-stroke:0.6px #1b1b22;">Genre-wise Distribution</div>
<div class="a" style="left:1481px;top:1258.5px;width:1016px;height:1.5px;background:#f0f1f4;"></div>
<div class="a" style="left:780px;top:1296.85px;width:19.5px;height:19.5px;border-radius:50%;background:#4caf50;"></div>
<div class="t" style="left:810px;top:1297.63px;font-size:17.8px;line-height:17.8px;color:#98a0ae;font-weight:400;">Books Issued</div>
<div class="a" style="left:942px;top:1296.85px;width:19.5px;height:19.5px;border-radius:50%;background:#2196f3;"></div>
<div class="t" style="left:972.5px;top:1297.63px;font-size:17.8px;line-height:17.8px;color:#98a0ae;font-weight:400;">Books Returned</div>
<div class="t" style="right:2066px;text-align:right;top:1355.53px;font-size:16.5px;line-height:16.5px;color:#98a0ae;font-weight:400;">90</div>
<div class="t" style="right:2066px;text-align:right;top:1411.03px;font-size:16.5px;line-height:16.5px;color:#98a0ae;font-weight:400;">80</div>
<svg style="left:0;top:0" width="2560" height="1440" viewBox="0 0 2560 1440">
<line x1="508.6" y1="1364" x2="1389" y2="1364" stroke="#aeb2bf" stroke-width="1.6" stroke-dasharray="1.5 1.5"/>
<line x1="508.6" y1="1419.5" x2="1389" y2="1419.5" stroke="#aeb2bf" stroke-width="1.6" stroke-dasharray="1.5 1.5"/>
<path d="M884.45,1458.60 L886.93,1449.10 L889.40,1440.60 L891.88,1433.10 L894.35,1426.60 L896.83,1421.10 L899.30,1416.60 L901.78,1413.10 L904.25,1410.60 L906.73,1409.10 L909.20,1408.60 L912.17,1409.10 L915.14,1410.60 L918.11,1413.10 L921.08,1416.60 L924.05,1421.10 L927.02,1426.60 L929.99,1433.10 L932.96,1440.60 L935.93,1449.10 L938.90,1458.60Z" fill="#4caf50" fill-opacity=".4"/>
<path d="M884.45,1458.60 L886.93,1449.10 L889.40,1440.60 L891.88,1433.10 L894.35,1426.60 L896.83,1421.10 L899.30,1416.60 L901.78,1413.10 L904.25,1410.60 L906.73,1409.10 L909.20,1408.60 L912.17,1409.10 L915.14,1410.60 L918.11,1413.10 L921.08,1416.60 L924.05,1421.10 L927.02,1426.60 L929.99,1433.10 L932.96,1440.60 L935.93,1449.10 L938.90,1458.60" fill="none" stroke="#4caf50" stroke-width="3.2" stroke-linejoin="round"/>
</svg>
<svg style="left:0;top:0" width="2560" height="1440" viewBox="0 0 2560 1440"><path d="M1988.60,1297.50 A222.5,222.5 0 0 1 2099.85,1712.69 L2060.75,1644.97 A144.3,144.3 0 0 0 1988.60,1375.70Z" fill="#4caf50" stroke="#fff" stroke-width="3"/><path d="M1867.42,1333.40 A222.5,222.5 0 0 1 1988.60,1297.50 L1988.60,1375.70 A144.3,144.3 0 0 0 1910.01,1398.98Z" fill="#3f51b5" stroke="#fff" stroke-width="3"/><path d="M1795.91,1631.25 A222.5,222.5 0 0 1 1867.42,1333.40 L1910.01,1398.98 A144.3,144.3 0 0 0 1863.63,1592.15Z" fill="#9c27b0" stroke="#fff" stroke-width="3"/></svg>
<div class="a" style="left:2466px;top:525px;width:72px;height:72px;border-radius:17px 0 0 17px;background:linear-gradient(135deg,#6a78ec,#5165e6);box-shadow:-2px 4px 14px rgba(0,0,0,.18);">
<svg style="left:0;top:0" width="72" height="72"><path d="M33.00,21.35 L33.12,21.35 L33.24,21.36 L33.35,21.38 L33.47,21.40 L33.59,21.42 L33.70,21.45 L33.82,21.49 L33.93,21.53 L34.05,21.58 L34.16,21.64 L34.27,21.70 L34.38,21.77 L34.49,21.84 L34.59,21.93 L34.70,22.02 L34.80,22.11 L34.89,22.22 L34.99,22.34 L35.08,22.47 L35.17,22.62 L35.24,22.80 L35.30,23.05 L35.30,23.61 L35.35,23.85 L35.41,24.03 L35.47,24.18 L35.54,24.32 L35.61,24.44 L35.68,24.55 L35.74,24.66 L35.81,24.75 L35.88,24.85 L35.95,24.93 L36.02,25.01 L36.09,25.09 L36.17,25.16 L36.24,25.23 L36.31,25.29 L36.38,25.35 L36.46,25.40 L36.53,25.45 L36.61,25.50 L36.69,25.54 L36.77,25.58 L36.85,25.62 L36.93,25.65 L37.01,25.67 L37.10,25.70 L37.18,25.72 L37.27,25.74 L37.36,25.75 L37.46,25.76 L37.55,25.77 L37.65,25.77 L37.75,25.77 L37.85,25.77 L37.96,25.76 L38.07,25.75 L38.18,25.74 L38.30,25.72 L38.42,25.69 L38.55,25.66 L38.69,25.62 L38.83,25.57 L38.98,25.51 L39.15,25.43 L39.36,25.29 L39.75,24.89 L39.97,24.76 L40.15,24.69 L40.32,24.64 L40.48,24.61 L40.63,24.59 L40.77,24.59 L40.91,24.59 L41.05,24.60 L41.18,24.62 L41.31,24.64 L41.43,24.67 L41.56,24.70 L41.67,24.74 L41.79,24.79 L41.90,24.84 L42.01,24.89 L42.11,24.95 L42.22,25.02 L42.31,25.09 L42.41,25.16 L42.50,25.24 L42.58,25.32 L42.66,25.40 L42.74,25.49 L42.81,25.59 L42.88,25.68 L42.95,25.79 L43.01,25.89 L43.06,26.00 L43.11,26.11 L43.16,26.23 L43.20,26.34 L43.23,26.47 L43.26,26.59 L43.28,26.72 L43.30,26.85 L43.31,26.99 L43.31,27.13 L43.31,27.27 L43.29,27.42 L43.26,27.58 L43.21,27.75 L43.14,27.93 L43.01,28.15 L42.61,28.54 L42.47,28.75 L42.39,28.92 L42.33,29.07 L42.28,29.21 L42.24,29.35 L42.21,29.48 L42.18,29.60 L42.16,29.72 L42.15,29.83 L42.14,29.94 L42.13,30.05 L42.13,30.15 L42.13,30.25 L42.13,30.35 L42.14,30.44 L42.15,30.54 L42.16,30.63 L42.18,30.72 L42.20,30.80 L42.23,30.89 L42.25,30.97 L42.28,31.05 L42.32,31.13 L42.36,31.21 L42.40,31.29 L42.45,31.37 L42.50,31.44 L42.55,31.52 L42.61,31.59 L42.67,31.66 L42.74,31.73 L42.81,31.81 L42.89,31.88 L42.97,31.95 L43.05,32.02 L43.15,32.09 L43.24,32.16 L43.35,32.22 L43.46,32.29 L43.58,32.36 L43.72,32.43 L43.87,32.49 L44.05,32.55 L44.29,32.60 L44.85,32.60 L45.10,32.66 L45.28,32.73 L45.43,32.82 L45.56,32.91 L45.68,33.01 L45.79,33.10 L45.88,33.20 L45.97,33.31 L46.06,33.41 L46.13,33.52 L46.20,33.63 L46.26,33.74 L46.32,33.85 L46.37,33.97 L46.41,34.08 L46.45,34.20 L46.48,34.31 L46.50,34.43 L46.52,34.55 L46.54,34.66 L46.55,34.78 L46.55,34.90 L46.55,35.02 L46.54,35.14 L46.52,35.25 L46.50,35.37 L46.48,35.49 L46.45,35.60 L46.41,35.72 L46.37,35.83 L46.32,35.95 L46.26,36.06 L46.20,36.17 L46.13,36.28 L46.06,36.39 L45.97,36.49 L45.88,36.60 L45.79,36.70 L45.68,36.79 L45.56,36.89 L45.43,36.98 L45.28,37.07 L45.10,37.14 L44.85,37.20 L44.29,37.20 L44.05,37.25 L43.87,37.31 L43.72,37.37 L43.58,37.44 L43.46,37.51 L43.35,37.58 L43.24,37.64 L43.15,37.71 L43.05,37.78 L42.97,37.85 L42.89,37.92 L42.81,37.99 L42.74,38.07 L42.67,38.14 L42.61,38.21 L42.55,38.28 L42.50,38.36 L42.45,38.43 L42.40,38.51 L42.36,38.59 L42.32,38.67 L42.28,38.75 L42.25,38.83 L42.23,38.91 L42.20,39.00 L42.18,39.08 L42.16,39.17 L42.15,39.26 L42.14,39.36 L42.13,39.45 L42.13,39.55 L42.13,39.65 L42.13,39.75 L42.14,39.86 L42.15,39.97 L42.16,40.08 L42.18,40.20 L42.21,40.32 L42.24,40.45 L42.28,40.59 L42.33,40.73 L42.39,40.88 L42.47,41.05 L42.61,41.26 L43.01,41.65 L43.14,41.87 L43.21,42.05 L43.26,42.22 L43.29,42.38 L43.31,42.53 L43.31,42.67 L43.31,42.81 L43.30,42.95 L43.28,43.08 L43.26,43.21 L43.23,43.33 L43.20,43.46 L43.16,43.57 L43.11,43.69 L43.06,43.80 L43.01,43.91 L42.95,44.01 L42.88,44.12 L42.81,44.21 L42.74,44.31 L42.66,44.40 L42.58,44.48 L42.50,44.56 L42.41,44.64 L42.31,44.71 L42.22,44.78 L42.11,44.85 L42.01,44.91 L41.90,44.96 L41.79,45.01 L41.67,45.06 L41.56,45.10 L41.43,45.13 L41.31,45.16 L41.18,45.18 L41.05,45.20 L40.91,45.21 L40.77,45.21 L40.63,45.21 L40.48,45.19 L40.32,45.16 L40.15,45.11 L39.97,45.04 L39.75,44.91 L39.36,44.51 L39.15,44.37 L38.98,44.29 L38.83,44.23 L38.69,44.18 L38.55,44.14 L38.42,44.11 L38.30,44.08 L38.18,44.06 L38.07,44.05 L37.96,44.04 L37.85,44.03 L37.75,44.03 L37.65,44.03 L37.55,44.03 L37.46,44.04 L37.36,44.05 L37.27,44.06 L37.18,44.08 L37.10,44.10 L37.01,44.13 L36.93,44.15 L36.85,44.18 L36.77,44.22 L36.69,44.26 L36.61,44.30 L36.53,44.35 L36.46,44.40 L36.38,44.45 L36.31,44.51 L36.24,44.57 L36.17,44.64 L36.09,44.71 L36.02,44.79 L35.95,44.87 L35.88,44.95 L35.81,45.05 L35.74,45.14 L35.68,45.25 L35.61,45.36 L35.54,45.48 L35.47,45.62 L35.41,45.77 L35.35,45.95 L35.30,46.19 L35.30,46.75 L35.24,47.00 L35.17,47.18 L35.08,47.33 L34.99,47.46 L34.89,47.58 L34.80,47.69 L34.70,47.78 L34.59,47.87 L34.49,47.96 L34.38,48.03 L34.27,48.10 L34.16,48.16 L34.05,48.22 L33.93,48.27 L33.82,48.31 L33.70,48.35 L33.59,48.38 L33.47,48.40 L33.35,48.42 L33.24,48.44 L33.12,48.45 L33.00,48.45 L32.88,48.45 L32.76,48.44 L32.65,48.42 L32.53,48.40 L32.41,48.38 L32.30,48.35 L32.18,48.31 L32.07,48.27 L31.95,48.22 L31.84,48.16 L31.73,48.10 L31.62,48.03 L31.51,47.96 L31.41,47.87 L31.30,47.78 L31.20,47.69 L31.11,47.58 L31.01,47.46 L30.92,47.33 L30.83,47.18 L30.76,47.00 L30.70,46.75 L30.70,46.19 L30.65,45.95 L30.59,45.77 L30.53,45.62 L30.46,45.48 L30.39,45.36 L30.32,45.25 L30.26,45.14 L30.19,45.05 L30.12,44.95 L30.05,44.87 L29.98,44.79 L29.91,44.71 L29.83,44.64 L29.76,44.57 L29.69,44.51 L29.62,44.45 L29.54,44.40 L29.47,44.35 L29.39,44.30 L29.31,44.26 L29.23,44.22 L29.15,44.18 L29.07,44.15 L28.99,44.13 L28.90,44.10 L28.82,44.08 L28.73,44.06 L28.64,44.05 L28.54,44.04 L28.45,44.03 L28.35,44.03 L28.25,44.03 L28.15,44.03 L28.04,44.04 L27.93,44.05 L27.82,44.06 L27.70,44.08 L27.58,44.11 L27.45,44.14 L27.31,44.18 L27.17,44.23 L27.02,44.29 L26.85,44.37 L26.64,44.51 L26.25,44.91 L26.03,45.04 L25.85,45.11 L25.68,45.16 L25.52,45.19 L25.37,45.21 L25.23,45.21 L25.09,45.21 L24.95,45.20 L24.82,45.18 L24.69,45.16 L24.57,45.13 L24.44,45.10 L24.33,45.06 L24.21,45.01 L24.10,44.96 L23.99,44.91 L23.89,44.85 L23.78,44.78 L23.69,44.71 L23.59,44.64 L23.50,44.56 L23.42,44.48 L23.34,44.40 L23.26,44.31 L23.19,44.21 L23.12,44.12 L23.05,44.01 L22.99,43.91 L22.94,43.80 L22.89,43.69 L22.84,43.57 L22.80,43.46 L22.77,43.33 L22.74,43.21 L22.72,43.08 L22.70,42.95 L22.69,42.81 L22.69,42.67 L22.69,42.53 L22.71,42.38 L22.74,42.22 L22.79,42.05 L22.86,41.87 L22.99,41.65 L23.39,41.26 L23.53,41.05 L23.61,40.88 L23.67,40.73 L23.72,40.59 L23.76,40.45 L23.79,40.32 L23.82,40.20 L23.84,40.08 L23.85,39.97 L23.86,39.86 L23.87,39.75 L23.87,39.65 L23.87,39.55 L23.87,39.45 L23.86,39.36 L23.85,39.26 L23.84,39.17 L23.82,39.08 L23.80,39.00 L23.77,38.91 L23.75,38.83 L23.72,38.75 L23.68,38.67 L23.64,38.59 L23.60,38.51 L23.55,38.43 L23.50,38.36 L23.45,38.28 L23.39,38.21 L23.33,38.14 L23.26,38.07 L23.19,37.99 L23.11,37.92 L23.03,37.85 L22.95,37.78 L22.85,37.71 L22.76,37.64 L22.65,37.58 L22.54,37.51 L22.42,37.44 L22.28,37.37 L22.13,37.31 L21.95,37.25 L21.71,37.20 L21.15,37.20 L20.90,37.14 L20.72,37.07 L20.57,36.98 L20.44,36.89 L20.32,36.79 L20.21,36.70 L20.12,36.60 L20.03,36.49 L19.94,36.39 L19.87,36.28 L19.80,36.17 L19.74,36.06 L19.68,35.95 L19.63,35.83 L19.59,35.72 L19.55,35.60 L19.52,35.49 L19.50,35.37 L19.48,35.25 L19.46,35.14 L19.45,35.02 L19.45,34.90 L19.45,34.78 L19.46,34.66 L19.48,34.55 L19.50,34.43 L19.52,34.31 L19.55,34.20 L19.59,34.08 L19.63,33.97 L19.68,33.85 L19.74,33.74 L19.80,33.63 L19.87,33.52 L19.94,33.41 L20.03,33.31 L20.12,33.20 L20.21,33.10 L20.32,33.01 L20.44,32.91 L20.57,32.82 L20.72,32.73 L20.90,32.66 L21.15,32.60 L21.71,32.60 L21.95,32.55 L22.13,32.49 L22.28,32.43 L22.42,32.36 L22.54,32.29 L22.65,32.22 L22.76,32.16 L22.85,32.09 L22.95,32.02 L23.03,31.95 L23.11,31.88 L23.19,31.81 L23.26,31.73 L23.33,31.66 L23.39,31.59 L23.45,31.52 L23.50,31.44 L23.55,31.37 L23.60,31.29 L23.64,31.21 L23.68,31.13 L23.72,31.05 L23.75,30.97 L23.77,30.89 L23.80,30.80 L23.82,30.72 L23.84,30.63 L23.85,30.54 L23.86,30.44 L23.87,30.35 L23.87,30.25 L23.87,30.15 L23.87,30.05 L23.86,29.94 L23.85,29.83 L23.84,29.72 L23.82,29.60 L23.79,29.48 L23.76,29.35 L23.72,29.21 L23.67,29.07 L23.61,28.92 L23.53,28.75 L23.39,28.54 L22.99,28.15 L22.86,27.93 L22.79,27.75 L22.74,27.58 L22.71,27.42 L22.69,27.27 L22.69,27.13 L22.69,26.99 L22.70,26.85 L22.72,26.72 L22.74,26.59 L22.77,26.47 L22.80,26.34 L22.84,26.23 L22.89,26.11 L22.94,26.00 L22.99,25.89 L23.05,25.79 L23.12,25.68 L23.19,25.59 L23.26,25.49 L23.34,25.40 L23.42,25.32 L23.50,25.24 L23.59,25.16 L23.69,25.09 L23.78,25.02 L23.89,24.95 L23.99,24.89 L24.10,24.84 L24.21,24.79 L24.33,24.74 L24.44,24.70 L24.57,24.67 L24.69,24.64 L24.82,24.62 L24.95,24.60 L25.09,24.59 L25.23,24.59 L25.37,24.59 L25.52,24.61 L25.68,24.64 L25.85,24.69 L26.03,24.76 L26.25,24.89 L26.64,25.29 L26.85,25.43 L27.02,25.51 L27.17,25.57 L27.31,25.62 L27.45,25.66 L27.58,25.69 L27.70,25.72 L27.82,25.74 L27.93,25.75 L28.04,25.76 L28.15,25.77 L28.25,25.77 L28.35,25.77 L28.45,25.77 L28.54,25.76 L28.64,25.75 L28.73,25.74 L28.82,25.72 L28.90,25.70 L28.99,25.67 L29.07,25.65 L29.15,25.62 L29.23,25.58 L29.31,25.54 L29.39,25.50 L29.47,25.45 L29.54,25.40 L29.62,25.35 L29.69,25.29 L29.76,25.23 L29.83,25.16 L29.91,25.09 L29.98,25.01 L30.05,24.93 L30.12,24.85 L30.19,24.75 L30.26,24.66 L30.32,24.55 L30.39,24.44 L30.46,24.32 L30.53,24.18 L30.59,24.03 L30.65,23.85 L30.70,23.61 L30.70,23.05 L30.76,22.80 L30.83,22.62 L30.92,22.47 L31.01,22.34 L31.11,22.22 L31.20,22.11 L31.30,22.02 L31.41,21.93 L31.51,21.84 L31.62,21.77 L31.73,21.70 L31.84,21.64 L31.95,21.58 L32.07,21.53 L32.18,21.49 L32.30,21.45 L32.41,21.42 L32.53,21.40 L32.65,21.38 L32.76,21.36 L32.88,21.35Z" fill="none" stroke="#fff" stroke-width="3" stroke-linejoin="round"/><circle cx="33" cy="34.9" r="3.6" fill="none" stroke="#fff" stroke-width="3"/></svg></div>
</body></html>
